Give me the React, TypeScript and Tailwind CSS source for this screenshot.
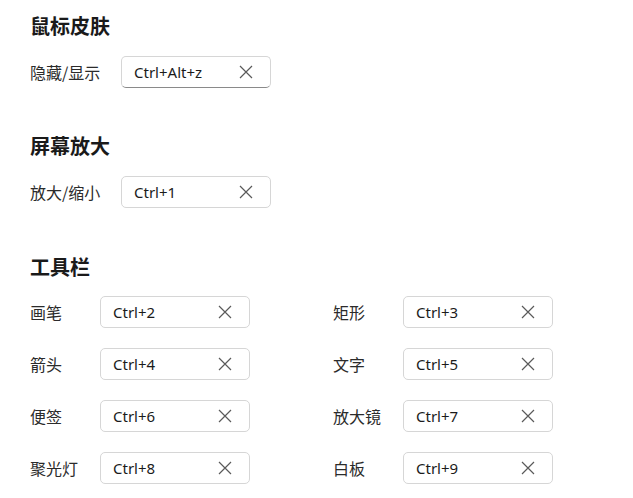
interface Shortcut {
  label: string;
  keys: string;
}

const tools: Shortcut[] = [
  { label: "画笔", keys: "Ctrl+2" },
  { label: "矩形", keys: "Ctrl+3" },
  { label: "箭头", keys: "Ctrl+4" },
  { label: "文字", keys: "Ctrl+5" },
  { label: "便签", keys: "Ctrl+6" },
  { label: "放大镜", keys: "Ctrl+7" },
  { label: "聚光灯", keys: "Ctrl+8" },
  { label: "白板", keys: "Ctrl+9" },
];

function ClearIcon() {
  return (
    <svg width="14" height="14" viewBox="0 0 14 14" className="text-[#5a5a5a]">
      <path d="M1 1L13 13M13 1L1 13" stroke="currentColor" strokeWidth="1.2" fill="none" />
    </svg>
  );
}

function KeyInput({ keys, focused }: { keys: string; focused?: boolean }) {
  return (
    <div
      className={`flex items-center justify-between w-[150px] h-[32px] pl-[12px] pr-[17px] rounded-[5px] border border-[#d6d6d6] bg-white ${
        focused ? "border-b-[#8a8a8a]" : ""
      }`}
    >
      <span className="text-[15px] text-[#1b1b1b] font-['Noto_Sans','Noto_Sans_CJK_SC',sans-serif]">
        {keys}
      </span>
      <ClearIcon />
    </div>
  );
}

function Row({ label, keys, labelWidth, focused }: Shortcut & { labelWidth: string; focused?: boolean }) {
  return (
    <div className="flex items-center">
      <span className={`${labelWidth} text-[16px] text-[#2b2b2b]`}>{label}</span>
      <KeyInput keys={keys} focused={focused} />
    </div>
  );
}

export default function App() {
  return (
    <div className="w-[633px] h-[498px] bg-white pl-[30px] pt-[12px] font-['Noto_Sans_CJK_SC','Noto_Sans',sans-serif] overflow-hidden">
      {/* 鼠标皮肤 */}
      <section>
        <h2 className="text-[20px] leading-[28px] font-bold text-[#1a1a1a]">鼠标皮肤</h2>
        <div className="mt-[16px]">
          <Row label="隐藏/显示" keys="Ctrl+Alt+z" labelWidth="w-[91px]" focused />
        </div>
      </section>

      {/* 屏幕放大 */}
      <section className="mt-[44px]">
        <h2 className="text-[20px] leading-[28px] font-bold text-[#1a1a1a]">屏幕放大</h2>
        <div className="mt-[16px]">
          <Row label="放大/缩小" keys="Ctrl+1" labelWidth="w-[91px]" />
        </div>
      </section>

      {/* 工具栏 */}
      <section className="mt-[45px]">
        <h2 className="text-[20px] leading-[28px] font-bold text-[#1a1a1a]">工具栏</h2>
        <div className="mt-[15px] grid grid-cols-[303px_303px] gap-y-[20px]">
          {tools.map((t) => (
            <Row key={t.label} label={t.label} keys={t.keys} labelWidth="w-[70px]" />
          ))}
        </div>
      </section>
    </div>
  );
}
